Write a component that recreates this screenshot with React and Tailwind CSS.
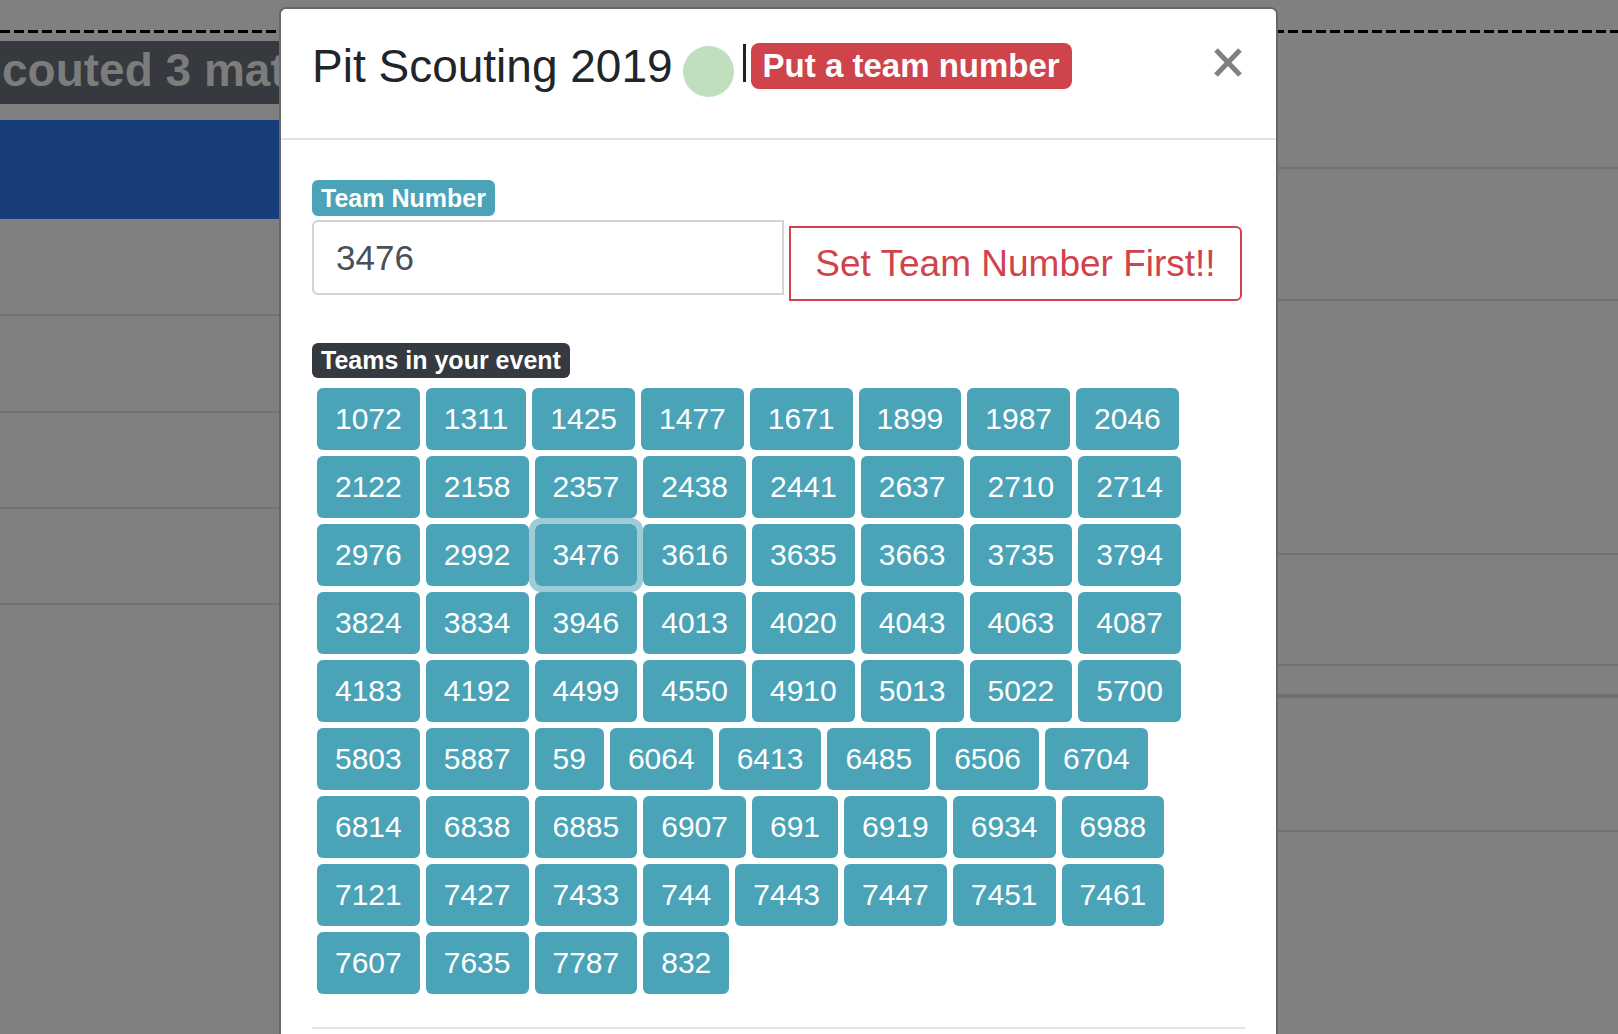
const teams = [
  '1072', '1311', '1425', '1477', '1671', '1899', '1987', '2046',
  '2122', '2158', '2357', '2438', '2441', '2637', '2710', '2714',
  '2976', '2992', '3476', '3616', '3635', '3663', '3735', '3794',
  '3824', '3834', '3946', '4013', '4020', '4043', '4063', '4087',
  '4183', '4192', '4499', '4550', '4910', '5013', '5022', '5700',
  '5803', '5887', '59', '6064', '6413', '6485', '6506', '6704',
  '6814', '6838', '6885', '6907', '691', '6919', '6934', '6988',
  '7121', '7427', '7433', '744', '7443', '7447', '7451', '7461',
  '7607', '7635', '7787', '832',
]

function TeamButton({ number, selected }) {
  return (
    <button
      type="button"
      className={
        'h-[62px] rounded-[6px] bg-[#4aa3b6] px-[18px] text-[30px] leading-none text-white ' +
        (selected ? 'relative z-10 outline-[6px] outline-solid outline-[#9fcbd6]' : '')
      }
    >
      {number}
    </button>
  )
}

function CloseIcon() {
  return (
    <svg width="28" height="29" viewBox="0 0 28 29" className="mb-[7px]">
      <line x1="2" y1="2" x2="26" y2="27" stroke="#808080" strokeWidth="5" />
      <line x1="26" y1="2" x2="2" y2="27" stroke="#808080" strokeWidth="5" />
    </svg>
  )
}

function Backdrop() {
  return (
    <div className="flex h-full flex-col">
      <div className="h-[30px]" />
      <div className="h-[3px] bg-[repeating-linear-gradient(90deg,#000_0_10px,transparent_10px_14px)]" />
      <div className="flex flex-1">
        <div className="w-[280px] overflow-hidden">
          <div className="mt-[8px] flex h-[63px] items-center overflow-hidden whitespace-nowrap bg-[#36393d] pb-[6px] pl-[2px] text-[46px] font-bold leading-none text-[#7c7c7c]">
            couted 3 mat
          </div>
          <div className="mt-[16px] h-[99px] bg-[#173d7a]" />
          <div className="h-[97px] border-b-2 border-[#727272]" />
          <div className="h-[97px] border-b-2 border-[#727272]" />
          <div className="h-[96px] border-b-2 border-[#727272]" />
          <div className="h-[96px] border-b-2 border-[#727272]" />
        </div>
        <div className="flex-1">
          <div className="h-[136px] border-b-2 border-[#727272]" />
          <div className="h-[132px] border-b-2 border-[#727272]" />
          <div className="h-[254px] border-b-2 border-[#727272]" />
          <div className="h-[111px] border-b-2 border-[#727272]" />
          <div className="h-[32px] border-b-[4px] border-[#6f6f6f]" />
          <div className="h-[134px] border-b-2 border-[#727272]" />
        </div>
      </div>
    </div>
  )
}

export default function App() {
  return (
    <div className="relative h-screen w-full overflow-hidden bg-[#808080] font-['Liberation_Sans',Arial,sans-serif]">
      <Backdrop />

      <div className="absolute left-[279px] top-[7px] w-[999px] rounded-[7px] border-2 border-[#676767] bg-white">
        <div className="flex h-[131px] items-center border-b-2 border-[#dee2e6] pb-[16px] pl-[31px] pr-[34px]">
          <span className="text-[46px] leading-none text-[#212529]">Pit Scouting 2019</span>
          <span className="ml-[10px] mt-[11px] h-[51px] w-[51px] rounded-full bg-[#bfdfbf]" />
          <span className="mb-[6px] ml-[9px] h-[38px] w-[3px] bg-[#222]" />
          <span className="ml-[5px] flex h-[46px] items-center rounded-[8px] bg-[#cf434b] px-[12px] text-[33px] font-bold leading-none text-white">
            Put a team number
          </span>
          <button type="button" className="ml-auto">
            <CloseIcon />
          </button>
        </div>

        <div className="px-[31px] pb-[60px] pt-[40px]">
          <span className="inline-flex h-[36px] items-center rounded-[6px] bg-[#4aa3b6] px-[9px] text-[25px] font-bold leading-none text-white">
            Team Number
          </span>
          <div className="mt-[4px] flex items-start">
            <input
              className="h-[75px] w-[472px] rounded-l-[6px] border-2 border-[#ced4da] pl-[22px] text-[35px] text-[#495057] outline-none"
              defaultValue="3476"
            />
            <button
              type="button"
              className="ml-[5px] mt-[6px] h-[75px] w-[453px] rounded-r-[6px] border-2 border-[#d0434b] text-[37px] leading-none text-[#d0434b]"
            >
              Set Team Number First!!
            </button>
          </div>

          <span className="mt-[42px] inline-flex h-[35px] items-center rounded-[6px] bg-[#343a40] px-[9px] text-[25px] font-bold leading-none text-white">
            Teams in your event
          </span>

          <div className="mt-[10px] flex w-[930px] flex-wrap gap-[6px] pl-[5px]">
            {teams.map((t) => (
              <TeamButton key={t} number={t} selected={t === '3476'} />
            ))}
          </div>

          <div className="mt-[33px] h-[2px] bg-[#e5e5e5]" />
        </div>
      </div>
    </div>
  )
}
